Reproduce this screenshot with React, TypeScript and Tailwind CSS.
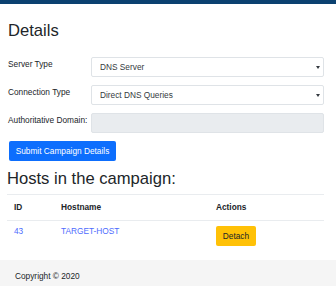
import React from "react";

const font = { fontFamily: '"Liberation Sans", Arial, sans-serif' };

function Caret() {
  return (
    <svg width="4" height="3" viewBox="0 0 4 3" className="shrink-0">
      <path d="M0 0 L4 0 L2 3 Z" fill="#343a40" />
    </svg>
  );
}

export default function App() {
  return (
    <div className="w-[336px] h-[286px] bg-white overflow-hidden text-[#212529]" style={font}>
      <div className="h-[4px] bg-[#0b4170]" />
      <div className="pl-[8px] pr-[12px]">
        <h2 className="text-[16.6px] leading-[20px] mt-[17px] mb-[16px] font-normal">Details</h2>

        <div className="flex items-start h-[20px] mb-[8px]">
          <div className="w-[83px] text-[8.3px] leading-[12px] pt-[1px]">Server Type</div>
          <div className="flex-1 h-[20px] border border-[#dfe3e7] rounded-[2px] flex items-center justify-between pl-[8px] pr-[3px] text-[8.3px] text-[#343a40]">
            <span>DNS Server</span>
            <Caret />
          </div>
        </div>

        <div className="flex items-start h-[20px] mb-[8px]">
          <div className="w-[83px] text-[8.3px] leading-[12px] pt-[1px]">Connection Type</div>
          <div className="flex-1 h-[20px] border border-[#dfe3e7] rounded-[2px] flex items-center justify-between pl-[8px] pr-[3px] text-[8.3px] text-[#343a40]">
            <span>Direct DNS Queries</span>
            <Caret />
          </div>
        </div>

        <div className="flex items-start h-[20px] mb-[8px]">
          <div className="w-[83px] text-[8.3px] leading-[12px] pt-[1px] whitespace-nowrap">Authoritative Domain:</div>
          <div className="flex-1 h-[20px] border border-[#dfe3e7] rounded-[2px] bg-[#e9ecef]" />
        </div>

        <button className="ml-[1px] w-[107px] h-[20px] rounded-[2px] bg-[#0d6efd] text-white text-[8.3px] leading-[12px] flex items-center justify-center">
          Submit Campaign Details
        </button>

        <h2 className="text-[16.6px] leading-[20px] mt-[8px] mb-[5px] font-normal -ml-[1px]">Hosts in the campaign:</h2>

        <div className="-ml-[1px] border-t border-[#e9ecef]">
          <div className="flex h-[26px] items-center border-b border-[#e9ecef] text-[8.3px] font-bold">
            <div className="w-[54px] pl-[7px]">ID</div>
            <div className="w-[155px]">Hostname</div>
            <div>Actions</div>
          </div>
          <div className="flex h-[34px] items-start text-[8.3px] leading-[12px] text-[#4d6bfe]">
            <div className="w-[54px] pl-[7px] pt-[4px]">43</div>
            <div className="w-[155px] pt-[4px]">TARGET-HOST</div>
            <div className="pt-[5px]">
              <div className="w-[40px] h-[20px] rounded-[2px] bg-[#ffc107] text-[#212529] flex items-center justify-center">Detach</div>
            </div>
          </div>
        </div>
      </div>
      <div className="mt-[5px] h-[30px] bg-[#f5f5f5] pl-[15px] pt-[10px] text-[8.3px] leading-[12px] text-[#212529]">
        Copyright © 2020
      </div>
    </div>
  );
}
